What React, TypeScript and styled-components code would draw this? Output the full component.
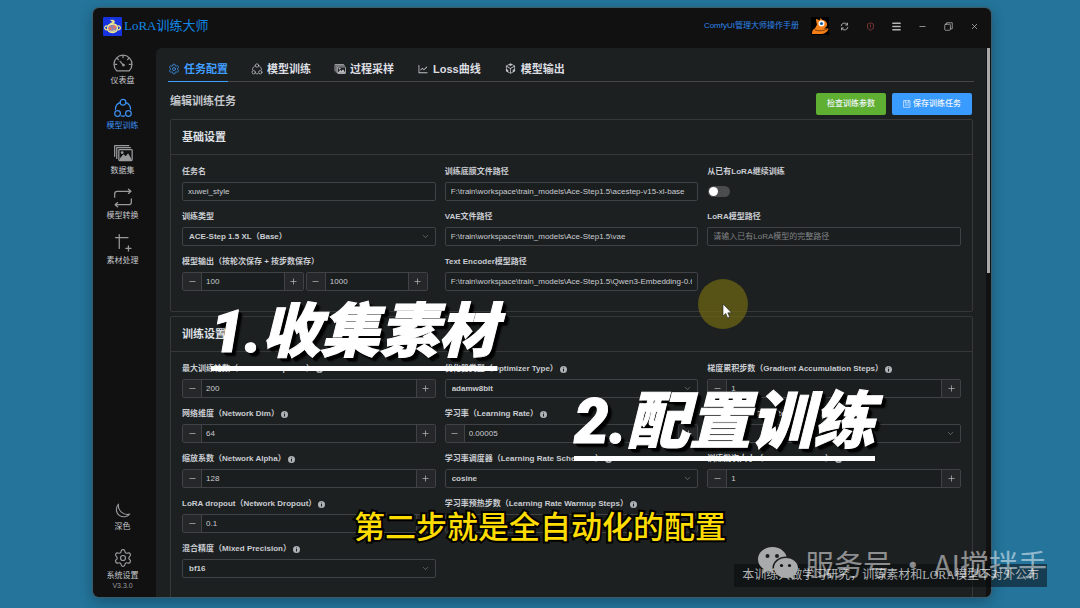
import React, { useId } from "react";
import styled, { createGlobalStyle, css } from "styled-components";
import { AiOutlineCodeSandbox, AiOutlineLineChart } from "react-icons/ai";
import { Settings, Minus, Plus, X, Menu, ChevronDown, ShieldAlert } from "lucide-react";

const sans = `"Liberation Sans", "Noto Sans CJK SC", sans-serif`;

const Global = createGlobalStyle`
  *, *::before, *::after { box-sizing: border-box; }
  body { margin: 0; background: #24749b; font-family: ${sans}; }
  button, input, select { font-family: inherit; margin: 0; }
`;

const Desktop = styled.div`
  position: relative;
  height: 100vh;
  padding: 8px 89px 11px 93px;
  background: #24749b;
  overflow: hidden;
`;

const AppWindow = styled.div`
  height: 100%;
  display: flex;
  flex-direction: column;
  background: #111112;
  border-radius: 6px;
  overflow: hidden;
  box-shadow: 0 0 1px 1px #3f5c69, 0 4px 14px rgba(0, 0, 0, 0.3);
`;

const TitleBar = styled.header`
  height: 40px;
  flex: none;
  display: flex;
  align-items: center;
  justify-content: space-between;
  padding: 0 4px 4px 10px;
`;

const Brand = styled.div`
  display: flex;
  align-items: center;
  gap: 2px;
  color: #1287e4;
  font: 13px/20px "Liberation Serif", "Noto Sans CJK SC", serif;
`;

const TitleActions = styled.div`
  display: flex;
  align-items: center;
`;

const Avatar = styled.span`
  display: block;
  margin: 0 2px 0 12px;
  svg { display: block; }
`;

const ManualLink = styled.a`
  color: #2d86ea;
  font-size: 8px;
  line-height: 12px;
  text-decoration: none;
`;

const TitleButton = styled.button<{ $danger?: boolean }>`
  width: 26px;
  height: 20px;
  display: grid;
  place-items: center;
  padding: 0;
  border: 0;
  background: none;
  color: ${(p) => (p.$danger ? "#a04444" : "#b4b4b6")};
`;

const Body = styled.div`
  flex: 1;
  min-height: 0;
  display: flex;
`;

const Sidebar = styled.nav`
  width: 63px;
  flex: none;
  display: flex;
  flex-direction: column;
  justify-content: space-between;
  padding: 5px 4px 6px 0;
`;

const SideGroup = styled.div<{ $gap: number }>`
  display: flex;
  flex-direction: column;
  gap: ${(p) => p.$gap}px;
`;

const SideItem = styled.button<{ $active?: boolean }>`
  height: 40px;
  display: flex;
  flex-direction: column;
  align-items: center;
  gap: 2px;
  padding: 0;
  border: 0;
  background: none;
  color: ${(p) => (p.$active ? "#3b8fee" : "#c6c8cb")};
  font-size: 8px;
  line-height: 12px;
  svg { opacity: ${(p) => (p.$active ? 1 : 0.75)}; }
`;

const Version = styled.div`
  margin-top: -14px;
  color: #999b9e;
  font-size: 7px;
  line-height: 10px;
  text-align: center;
`;

const Panel = styled.main`
  flex: 1;
  min-width: 0;
  padding: 0 12px;
  background: #1d2021;
  border-top-left-radius: 6px;
  overflow: hidden;
`;

const ScrollTrack = styled.div`
  width: 5px;
  flex: none;
  padding-right: 1px;
  border-left: 1px solid #111112;
`;

const ScrollThumb = styled.div`
  width: 3px;
  height: 41%;
  background: #a9a9ab;
`;

const Tabs = styled.div`
  display: flex;
  gap: 23px;
  height: 34px;
  border-bottom: 1px solid #464649;
`;

const Tab = styled.button<{ $active?: boolean }>`
  display: flex;
  align-items: center;
  gap: 4px;
  padding: 8px 0 0;
  margin-bottom: -1px;
  border: 0;
  border-bottom: 1px solid ${(p) => (p.$active ? "#409eff" : "transparent")};
  background: none;
  color: ${(p) => (p.$active ? "#409eff" : "#dcdee2")};
  font-size: 11px;
  line-height: 16px;
  font-weight: 700;
  svg { opacity: 0.85; }
`;

const Toolbar = styled.div`
  display: flex;
  justify-content: space-between;
  align-items: flex-start;
  margin: 11px 2px 4px;
`;

const Heading = styled.h1`
  margin: 0;
  color: #c4c7cb;
  font-size: 11px;
  line-height: 16px;
  font-weight: 700;
`;

const Actions = styled.div`
  display: flex;
  gap: 6px;
`;

const ActionButton = styled.button<{ $kind: "success" | "primary" }>`
  height: 22px;
  display: flex;
  align-items: center;
  gap: 2px;
  padding: 0 11px;
  border: 0;
  border-radius: 2px;
  background: ${(p) => (p.$kind === "success" ? "#5fb032" : "#3a9bff")};
  color: #f0f6fb;
  font-size: 8px;
  line-height: 12px;
  font-weight: 500;
`;

const Card = styled.section`
  margin: 0 1px 4px 2px;
  border: 1px solid #353739;
  border-radius: 2px;
`;

const CardTitle = styled.h2`
  margin: 0;
  height: 35px;
  padding: 0 11px;
  border-bottom: 1px solid #353739;
  color: #dfe1e5;
  font-size: 11px;
  line-height: 34px;
  font-weight: 700;
`;

const Fields = styled.div`
  display: grid;
  grid-template-columns: repeat(3, minmax(0, 1fr));
  column-gap: 9px;
  row-gap: 6px;
  padding: 7px 11px 20px;
`;

const FieldBox = styled.div<{ $col?: number }>`
  ${(p) => p.$col && css`grid-column: ${p.$col};`}
`;

const Label = styled.label`
  display: flex;
  align-items: center;
  gap: 2px;
  height: 20px;
  color: #c9ccd1;
  font-size: 8px;
  line-height: 12px;
  font-weight: 700;
  white-space: nowrap;
`;

const control = css`
  width: 100%;
  height: 19px;
  border: 1px solid #404245;
  border-radius: 2px;
  background: #1b1e1f;
  color: #c9ccd1;
  font-size: 8px;
  line-height: 12px;
  outline: 0;
`;

const TextInput = styled.input`
  ${control}
  display: block;
  padding: 0 5px;
  &::placeholder { color: #808286; opacity: 1; }
`;

const SelectWrap = styled.div`
  display: grid;
  align-items: center;
  > * { grid-area: 1 / 1; }
  > svg { justify-self: end; margin-right: 6px; color: #77797d; pointer-events: none; }
`;

const SelectInput = styled.select`
  ${control}
  appearance: none;
  padding: 0 6px;
  font-weight: 700;
`;

const NumberBox = styled.div`
  ${control}
  display: flex;
  overflow: hidden;
`;

const NumberInput = styled.input`
  flex: 1;
  min-width: 0;
  padding: 0 4px;
  border: 0;
  background: none;
  color: inherit;
  font-size: 8px;
  outline: 0;
`;

const StepButton = styled.button<{ $side: "left" | "right" }>`
  width: 19px;
  flex: none;
  display: grid;
  place-items: center;
  padding: 0;
  border: 0;
  border-${(p) => (p.$side === "left" ? "right" : "left")}: 1px solid #404245;
  background: #262728;
  color: #b2b4b8;
`;

const NumberPair = styled.div`
  display: grid;
  grid-template-columns: 1fr 1fr;
  gap: 2px;
  padding-right: 8px;
`;

const SwitchInput = styled.input`
  appearance: none;
  display: block;
  width: 22px;
  height: 11px;
  margin: 4px 0 4px 1px;
  border-radius: 6px;
  background: #4b4c4e;
  &::before {
    content: "";
    display: block;
    width: 9px;
    height: 9px;
    margin: 1px;
    border-radius: 50%;
    background: #fff;
  }
`;

const Callout = styled.div<{ $x: number; $y: number; $size: number }>`
  position: absolute;
  left: ${(p) => p.$x}px;
  top: ${(p) => p.$y}px;
  height: 73px;
  border-bottom: 5px solid #fff;
  color: #fff;
  font: italic 900 ${(p) => p.$size}px/68px Roboto, "Noto Sans CJK SC", sans-serif;
  white-space: nowrap;
  -webkit-text-stroke: 1px #fff;
  text-shadow: 3px 3px 0 #000, 2px 2px 0 #000, 4px 4px 2px #000;
`;

const Subtitle = styled.p`
  position: absolute;
  left: 0;
  right: 0;
  top: 507px;
  margin: 0;
  color: #ffdc00;
  font: 500 31px/36px "Noto Sans CJK SC", sans-serif;
  text-align: center;
  -webkit-text-stroke: 4px #000;
  paint-order: stroke fill;
`;

const Notice = styled.p`
  position: absolute;
  right: 33px;
  bottom: 21px;
  margin: 0;
  padding: 0 8px;
  background: rgba(8, 10, 12, 0.52);
  color: #b0b3b5;
  font: 12px/23px "Liberation Serif", "Noto Sans CJK SC", serif;
  white-space: nowrap;
`;

const Watermark = styled.div`
  position: absolute;
  right: 33px;
  bottom: 25px;
  display: flex;
  align-items: center;
  gap: 6px;
  color: rgba(255, 255, 255, 0.5);
  font: 400 29px/40px "Noto Sans CJK SC", sans-serif;
  white-space: nowrap;
`;

const Pointer = styled.div`
  position: absolute;
  left: 698px;
  top: 279px;
  width: 50px;
  height: 50px;
  padding: 24px 0 0 24px;
  border-radius: 50%;
  background: rgba(118, 108, 16, 0.66);
  svg { display: block; }
`;

type IconProps = { size?: number };

const Svg = ({ size = 18, children, vb = 24, w = 1.5 }: { size?: number; children: React.ReactNode; vb?: number; w?: number }) => (
  <svg width={size} height={size} viewBox={`0 0 ${vb} ${vb}`} fill="none" stroke="currentColor" strokeWidth={w} strokeLinecap="round" strokeLinejoin="round" aria-hidden="true">
    {children}
  </svg>
);

const GaugeIcon = () => (
  <Svg size={20}>
    <path d="M4.500 21.500C2.500 19.500 1.200 17 1.200 13.500a10.800 10.800 0 0 1 21.600 0c0 3.500-1.300 6-3.300 8z" />
    <path d="M12 3v2.500M5 6.500l1.500 1.500M19 6.500 17.500 8M2 13.500h2.500M19.500 13.500H22M8.500 10l3.500 4" />
    <circle cx="12.500" cy="14.500" r="1" />
  </Svg>
);

const NodesIcon = ({ size = 20 }: IconProps) => (
  <Svg size={size}>
    <circle cx="12" cy="5" r="3.400" />
    <circle cx="5.500" cy="18.500" r="3.400" />
    <circle cx="18.500" cy="18.500" r="3.400" />
    <path d="M8.500 5.500C5.500 6.500 3 9.500 3 13.500M15.500 5.500c3 1 5.500 4 5.500 8M10 21.500c1.300.5 2.700.5 4 0" />
  </Svg>
);

const GalleryIcon = ({ size = 20 }: IconProps) => (
  <Svg size={size}>
    <path d="M2 16V3h17M4.500 18.500v-13H21" />
    <rect x="7" y="8" width="16" height="13" rx="1" />
    <path d="m8.500 19.500 4-5 3 2.500 2.500-3.500 3.500 6z" fill="currentColor" />
    <circle cx="11" cy="11.500" r="1" fill="currentColor" />
  </Svg>
);

const ConvertIcon = () => (
  <Svg size={20}>
    <path d="M2 11V7a3 3 0 0 1 3-3h16M18.500 1.500 21.500 4l-3 2.500M22 13v4a3 3 0 0 1-3 3H3M5.500 17.500 2.500 20l3 2.500" />
  </Svg>
);

const CropPlusIcon = () => (
  <Svg size={20}>
    <path d="M3 5.500h15M7.500 2v16.500M18.500 15.500v6M15.500 18.500h6" />
  </Svg>
);

const MoonIcon = () => (
  <Svg size={18} w={1.4}>
    <path d="M6 4a12 12 0 0 0 15 13.500C18 21 12 22.500 7.500 19.500 2 16 2 8 6 4z" />
  </Svg>
);

const RefreshIcon = () => (
  <Svg size={9} w={2.4}>
    <path d="M3 10a9 9 0 0 1 16.500-3M21 14A9 9 0 0 1 4.500 17M20 3v5h-5M4 21v-5h5" />
  </Svg>
);

const WindowsIcon = () => (
  <Svg size={9} w={2}>
    <rect x="2" y="6" width="15" height="16" rx="2" />
    <path d="M7 6V2h15v16h-5" />
  </Svg>
);

const SaveIcon = () => (
  <Svg size={8} w={2}>
    <rect x="3" y="2" width="18" height="20" />
    <path d="M7 2v7h10V2M7 15h10" />
  </Svg>
);

const InfoIcon = () => (
  <svg width="7" height="7" viewBox="0 0 14 14" aria-hidden="true">
    <circle cx="7" cy="7" r="7" fill="#aeb1b5" />
    <path d="M7 6v5M7 3v1.600" stroke="#1d2021" strokeWidth="2" />
  </svg>
);

const LogoIcon = () => (
  <svg width="19" height="19" viewBox="0 0 38 38" aria-hidden="true">
    <rect width="38" height="38" rx="2" fill="#1733e0" />
    <path d="M9 18c-5-1-7 3-5 6 2 2 4 2 6 1M29 18c5-1 7 3 5 6-2 2-4 2-6 1" fill="none" stroke="#f1e98c" strokeWidth="2.400" />
    <path d="M9 21c1-5 5-7 10-7s9 2 10 7c0 7-4 10-10 10S9 28 9 21z" fill="#8a86b8" stroke="#f1e98c" strokeWidth="2.600" />
    <path d="M14 13c2-2 5-1 6-5-2 1-4 0-5-2 5 0 8 0 8 3 0 2-1 3-2 4z" fill="#f1e98c" stroke="#f1e98c" />
    <circle cx="14" cy="23" r="3" fill="#f0705a" />
    <circle cx="23" cy="20" r="3" fill="#f0705a" />
    <path d="M15 28c3 1 6 1 9-2" fill="none" stroke="#f1e98c" strokeWidth="2" />
  </svg>
);

const BlenderIcon = () => (
  <svg width="18" height="18" viewBox="0 0 36 36" aria-hidden="true">
    <rect width="36" height="36" fill="#000" />
    <path d="M10 4c3 0 5 2 7 3l3-6c0 2 1 4 3 5 6 1 9 4 9 9 0 4-3 7-7 8h10c-1 7-8 11-17 11H2c0-5 1-8 4-10 4-3 4-6 6-9-1-4-2-7-2-11z" fill="#f57f17" />
    <path d="M7 25c7 4 17 3 26-1" fill="none" stroke="#5a2a00" strokeWidth="1.500" />
    <circle cx="21" cy="13" r="6" fill="#fff" />
    <circle cx="21" cy="13" r="3.200" fill="#1d5f9a" />
  </svg>
);

const WechatIcon = () => (
  <svg width="41" height="33" viewBox="0 0 41 33" aria-hidden="true">
    <defs>
      <mask id="bubbles">
        <rect width="41" height="33" fill="#fff" />
        <ellipse cx="28" cy="21" rx="13.500" ry="11.500" fill="#000" />
        <circle cx="9.500" cy="9" r="2" fill="#000" />
        <circle cx="19" cy="9" r="2" fill="#000" />
      </mask>
      <mask id="eyes">
        <rect width="41" height="33" fill="#fff" />
        <circle cx="23.500" cy="18.500" r="1.600" fill="#000" />
        <circle cx="31.500" cy="18.500" r="1.600" fill="#000" />
      </mask>
    </defs>
    <path mask="url(#bubbles)" d="M14.500 0C6.500 0 0 5.500 0 12.500c0 4 2 7 5.500 9.500L4 27l5.500-2.800c2 .6 3.500.8 5 .8C22.500 25 29 19.500 29 12.500S22.500 0 14.500 0z" fill="#a9aaab" />
    <path mask="url(#eyes)" d="M28 11c-6.700 0-12 4.500-12 10s5.300 10 12 10c1.500 0 3-.2 4-.6l4.500 2.400-1.200-4c3-2 4.700-4.700 4.700-7.800 0-5.500-5.300-10-12-10z" fill="#a9aaab" />
  </svg>
);

type Field = {
  label: string;
  kind: "text" | "select" | "number" | "pair" | "switch";
  value?: string;
  second?: string;
  info?: boolean;
  placeholder?: string;
  col?: number;
};

const Stepper = ({ id, value, name }: { id?: string; value?: string; name: string }) => (
  <NumberBox>
    <StepButton $side="left" type="button" aria-label="减少"><Minus size={9} strokeWidth={2} /></StepButton>
    <NumberInput id={id} defaultValue={value} inputMode="decimal" aria-label={id ? undefined : name} />
    <StepButton $side="right" type="button" aria-label="增加"><Plus size={9} strokeWidth={2} /></StepButton>
  </NumberBox>
);

const FormField = ({ f }: { f: Field }) => {
  const id = useId();
  return (
    <FieldBox $col={f.col}>
      <Label htmlFor={id}>
        {f.label}
        {f.info && <InfoIcon />}
      </Label>
      {f.kind === "text" && <TextInput id={id} defaultValue={f.value} placeholder={f.placeholder} />}
      {f.kind === "select" && (
        <SelectWrap>
          <SelectInput id={id}><option>{f.value}</option></SelectInput>
          <ChevronDown size={9} strokeWidth={2} />
        </SelectWrap>
      )}
      {f.kind === "number" && <Stepper id={id} value={f.value} name={f.label} />}
      {f.kind === "pair" && (
        <NumberPair>
          <Stepper id={id} value={f.value} name={f.label} />
          <Stepper value={f.second} name="按步数保存" />
        </NumberPair>
      )}
      {f.kind === "switch" && <SwitchInput id={id} type="checkbox" role="switch" />}
    </FieldBox>
  );
};

const basic: Field[] = [
  { label: "任务名", kind: "text", value: "xuwei_style" },
  { label: "训练底膜文件路径", kind: "text", value: "F:\\train\\workspace\\train_models\\Ace-Step1.5\\acestep-v15-xl-base" },
  { label: "从已有LoRA继续训练", kind: "switch" },
  { label: "训练类型", kind: "select", value: "ACE-Step 1.5 XL（Base）" },
  { label: "VAE文件路径", kind: "text", value: "F:\\train\\workspace\\train_models\\Ace-Step1.5\\vae" },
  { label: "LoRA模型路径", kind: "text", placeholder: "请输入已有LoRA模型的完整路径" },
  { label: "模型输出（按轮次保存 + 按步数保存）", kind: "pair", value: "100", second: "1000" },
  { label: "Text Encoder模型路径", kind: "text", value: "F:\\train\\workspace\\train_models\\Ace-Step1.5\\Qwen3-Embedding-0.6B" },
];

const training: Field[] = [
  { label: "最大训练轮数（Max Train Epochs）", kind: "number", value: "200", info: true },
  { label: "优化器类型（Optimizer Type）", kind: "select", value: "adamw8bit", info: true },
  { label: "梯度累积步数（Gradient Accumulation Steps）", kind: "number", value: "1", info: true },
  { label: "网络维度（Network Dim）", kind: "number", value: "64", info: true },
  { label: "学习率（Learning Rate）", kind: "number", value: "0.00005", info: true },
  { label: "时间步采样（Timestep Type）", kind: "select", value: "", info: true },
  { label: "缩放系数（Network Alpha）", kind: "number", value: "128", info: true },
  { label: "学习率调度器（Learning Rate Scheduler）", kind: "select", value: "cosine", info: true },
  { label: "训练批次大小（Train Batch Size）", kind: "number", value: "1", info: true },
  { label: "LoRA dropout（Network Dropout）", kind: "number", value: "0.1", info: true },
  { label: "学习率预热步数（Learning Rate Warmup Steps）", kind: "number", value: "0", info: true },
  { label: "混合精度（Mixed Precision）", kind: "select", value: "bf16", info: true, col: 1 },
];

export default function App() {
  return (
    <Desktop>
      <Global />
      <AppWindow>
        <TitleBar>
          <Brand><LogoIcon />LoRA训练大师</Brand>
          <TitleActions>
            <ManualLink href="#manual">ComfyUI管理大师操作手册</ManualLink>
            <Avatar><BlenderIcon /></Avatar>
            <TitleButton aria-label="刷新"><RefreshIcon /></TitleButton>
            <TitleButton aria-label="警告" $danger><ShieldAlert size={9} /></TitleButton>
            <TitleButton aria-label="菜单"><Menu size={11} strokeWidth={3} /></TitleButton>
            <TitleButton aria-label="最小化"><Minus size={9} /></TitleButton>
            <TitleButton aria-label="还原"><WindowsIcon /></TitleButton>
            <TitleButton aria-label="关闭"><X size={9} /></TitleButton>
          </TitleActions>
        </TitleBar>
        <Body>
          <Sidebar>
            <SideGroup $gap={5}>
              <SideItem><GaugeIcon />仪表盘</SideItem>
              <SideItem $active><NodesIcon />模型训练</SideItem>
              <SideItem><GalleryIcon />数据集</SideItem>
              <SideItem><ConvertIcon />模型转换</SideItem>
              <SideItem><CropPlusIcon />素材处理</SideItem>
            </SideGroup>
            <SideGroup $gap={7}>
              <SideItem><MoonIcon />深色</SideItem>
              <SideItem><Settings size={20} strokeWidth={1.4} />系统设置</SideItem>
              <Version>V3.3.0</Version>
            </SideGroup>
          </Sidebar>
          <Panel>
            <Tabs role="tablist">
              <Tab role="tab" $active><Settings size={12} strokeWidth={1.8} />任务配置</Tab>
              <Tab role="tab"><NodesIcon size={12} />模型训练</Tab>
              <Tab role="tab"><GalleryIcon size={12} />过程采样</Tab>
              <Tab role="tab"><AiOutlineLineChart size={12} />Loss曲线</Tab>
              <Tab role="tab"><AiOutlineCodeSandbox size={13} />模型输出</Tab>
            </Tabs>
            <Toolbar>
              <Heading>编辑训练任务</Heading>
              <Actions>
                <ActionButton type="button" $kind="success">检查训练参数</ActionButton>
                <ActionButton type="button" $kind="primary"><SaveIcon />保存训练任务</ActionButton>
              </Actions>
            </Toolbar>
            <Card>
              <CardTitle>基础设置</CardTitle>
              <Fields>{basic.map((f) => <FormField key={f.label} f={f} />)}</Fields>
            </Card>
            <Card>
              <CardTitle>训练设置</CardTitle>
              <Fields>{training.map((f) => <FormField key={f.label} f={f} />)}</Fields>
            </Card>
          </Panel>
          <ScrollTrack><ScrollThumb /></ScrollTrack>
        </Body>
      </AppWindow>
      <Pointer>
        <svg width="10" height="16" viewBox="0 0 10 16" aria-hidden="true">
          <path d="M1 1v12l2.800-2.600L5.600 15l2-.9-1.800-4.300H9.500z" fill="#fff" stroke="#222" strokeWidth=".6" />
        </svg>
      </Pointer>
      <Callout $x={211} $y={298} $size={59}>1.收集素材</Callout>
      <Callout $x={574} $y={388} $size={62}>2.配置训练</Callout>
      <Subtitle>第二步就是全自动化的配置</Subtitle>
      <Notice>本训练只做学习研究，训练素材和LORA模型不对外公布</Notice>
      <Watermark><WechatIcon />服务号 · AI搅拌手</Watermark>
    </Desktop>
  );
}
